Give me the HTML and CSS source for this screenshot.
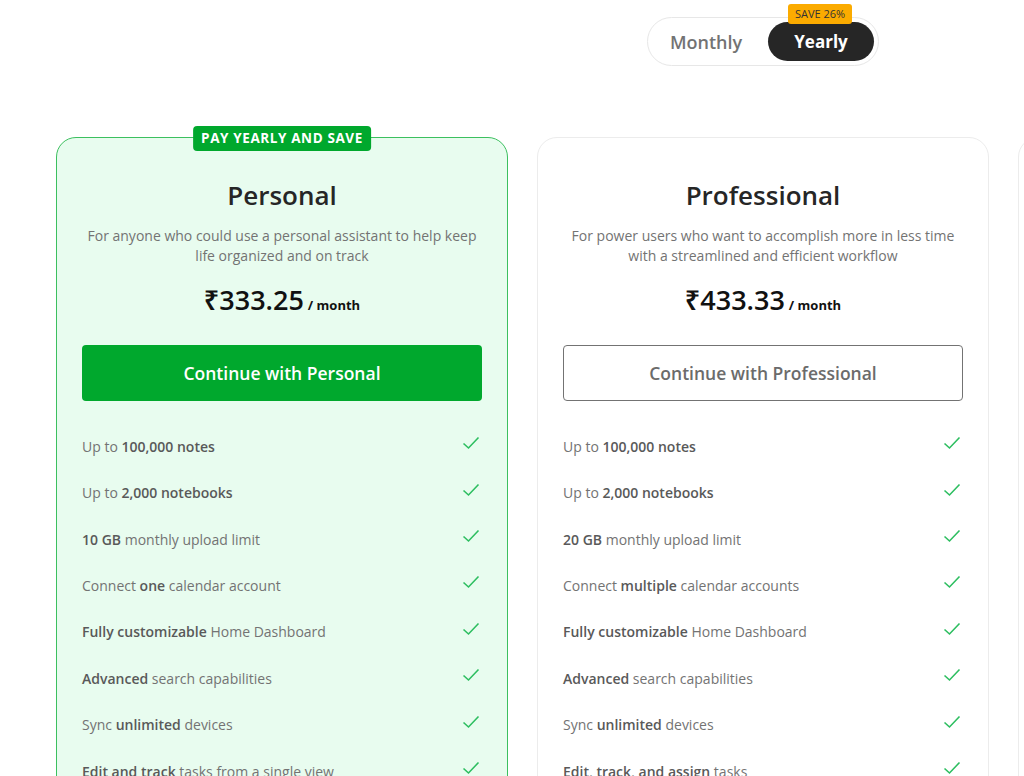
FILE: index.html
```html
<!DOCTYPE html>
<html>
<head>
<meta charset="utf-8">
<link rel="stylesheet" href="styles.css">
</head>
<body>
<div class="page">
  <div class="toggle-row">
    <div class="toggle">
      <button class="tab">Monthly</button>
      <button class="tab active">Yearly<span class="save">SAVE 26%</span></button>
    </div>
  </div>
  <div class="cards">
    <div class="card featured">
      <div class="ribbon">PAY YEARLY AND SAVE</div>
      <h2 class="title">Personal</h2>
      <p class="desc">For anyone who could use a personal assistant to help keep life organized and on track</p>
      <div class="price"><span class="amount">₹333.25</span><span class="per">/ month</span></div>
      <button class="cta primary">Continue with Personal</button>
      <ul class="features">
        <li><span>Up to <b>100,000 notes</b></span><svg class="check" viewBox="0 0 18 14"><polyline points="1.5,7.5 6.5,12 16.5,1.5"/></svg></li>
        <li><span>Up to <b>2,000 notebooks</b></span><svg class="check" viewBox="0 0 18 14"><polyline points="1.5,7.5 6.5,12 16.5,1.5"/></svg></li>
        <li><span><b>10 GB</b> monthly upload limit</span><svg class="check" viewBox="0 0 18 14"><polyline points="1.5,7.5 6.5,12 16.5,1.5"/></svg></li>
        <li><span>Connect <b>one</b> calendar account</span><svg class="check" viewBox="0 0 18 14"><polyline points="1.5,7.5 6.5,12 16.5,1.5"/></svg></li>
        <li><span><b>Fully customizable</b> Home Dashboard</span><svg class="check" viewBox="0 0 18 14"><polyline points="1.5,7.5 6.5,12 16.5,1.5"/></svg></li>
        <li><span><b>Advanced</b> search capabilities</span><svg class="check" viewBox="0 0 18 14"><polyline points="1.5,7.5 6.5,12 16.5,1.5"/></svg></li>
        <li><span>Sync <b>unlimited</b> devices</span><svg class="check" viewBox="0 0 18 14"><polyline points="1.5,7.5 6.5,12 16.5,1.5"/></svg></li>
        <li><span><b>Edit and track</b> tasks from a single view</span><svg class="check" viewBox="0 0 18 14"><polyline points="1.5,7.5 6.5,12 16.5,1.5"/></svg></li>
      </ul>
    </div>
    <div class="card">
      <h2 class="title">Professional</h2>
      <p class="desc">For power users who want to accomplish more in less time with a streamlined and efficient workflow</p>
      <div class="price"><span class="amount">₹433.33</span><span class="per">/ month</span></div>
      <button class="cta outline">Continue with Professional</button>
      <ul class="features">
        <li><span>Up to <b>100,000 notes</b></span><svg class="check" viewBox="0 0 18 14"><polyline points="1.5,7.5 6.5,12 16.5,1.5"/></svg></li>
        <li><span>Up to <b>2,000 notebooks</b></span><svg class="check" viewBox="0 0 18 14"><polyline points="1.5,7.5 6.5,12 16.5,1.5"/></svg></li>
        <li><span><b>20 GB</b> monthly upload limit</span><svg class="check" viewBox="0 0 18 14"><polyline points="1.5,7.5 6.5,12 16.5,1.5"/></svg></li>
        <li><span>Connect <b>multiple</b> calendar accounts</span><svg class="check" viewBox="0 0 18 14"><polyline points="1.5,7.5 6.5,12 16.5,1.5"/></svg></li>
        <li><span><b>Fully customizable</b> Home Dashboard</span><svg class="check" viewBox="0 0 18 14"><polyline points="1.5,7.5 6.5,12 16.5,1.5"/></svg></li>
        <li><span><b>Advanced</b> search capabilities</span><svg class="check" viewBox="0 0 18 14"><polyline points="1.5,7.5 6.5,12 16.5,1.5"/></svg></li>
        <li><span>Sync <b>unlimited</b> devices</span><svg class="check" viewBox="0 0 18 14"><polyline points="1.5,7.5 6.5,12 16.5,1.5"/></svg></li>
        <li><span><b>Edit, track, and assign</b> tasks</span><svg class="check" viewBox="0 0 18 14"><polyline points="1.5,7.5 6.5,12 16.5,1.5"/></svg></li>
      </ul>
    </div>
    <div class="card">
      <h2 class="title">Teams</h2>
    </div>
  </div>
</div>
</body>
</html>
```

FILE: styles.css
```css
* { box-sizing: border-box; }
html, body { margin: 0; padding: 0; background: #fff; }
body {
  font-family: "Open Sans", "Noto Sans", "Liberation Sans", sans-serif;
  color: #333;
  overflow: hidden;
  width: 1024px;
  height: 776px;
}
.page { width: 1024px; overflow: hidden; }

.toggle-row {
  display: flex;
  padding-top: 17px;
  padding-left: 647px;
  height: 137px;
}
.toggle {
  display: flex;
  align-items: center;
  gap: 4px;
  width: 232px;
  height: 49px;
  border: 1px solid #e7e7e7;
  border-radius: 25px;
  padding: 0 4px 0 0;
}
.tab {
  position: relative;
  border: 0;
  background: transparent;
  font-family: inherit;
  font-size: 18px;
  font-weight: 600;
  color: #737373;
  height: 39px;
  border-radius: 20px;
  padding: 0;
  cursor: pointer;
}
.tab:first-child { width: 116px; }
.tab.active {
  width: 106px;
  background: #262626;
  color: #fff;
  font-weight: 700;
  font-size: 17px;
}
.save {
  position: absolute;
  top: -18px;
  left: 20px;
  width: 64px;
  height: 20px;
  line-height: 20px;
  background: #fbab00;
  color: #333;
  font-size: 11px;
  font-weight: 500;
  border-radius: 3px;
  text-align: center;
}

.cards {
  display: flex;
  gap: 29px;
  padding-left: 56px;
}
.card {
  position: relative;
  flex: 0 0 452px;
  height: 700px;
  border: 1px solid #ececec;
  border-radius: 20px;
  padding: 38px 25px 0;
  background: #fff;
  text-align: center;
}
.card.featured {
  background: #e8fcef;
  border-color: #3cc05f;
}
.ribbon {
  position: absolute;
  top: -12px;
  left: 50%;
  transform: translateX(-50%);
  background: #00a82d;
  color: #fff;
  font-size: 13.5px;
  font-weight: 700;
  letter-spacing: 0.6px;
  padding: 0 8px;
  height: 25px;
  line-height: 25px;
  border-radius: 4px;
  white-space: nowrap;
}
.title {
  margin: 0;
  font-size: 26px;
  font-weight: 600;
  line-height: 38px;
  color: #262626;
}
.desc {
  margin: 12px 0 0;
  font-size: 14px;
  line-height: 20px;
  color: #737373;
}
.price {
  margin-top: 16px;
  line-height: 36px;
  color: #111;
}
.amount {
  font-size: 27px;
  font-weight: 600;
}
.per {
  font-size: 13px;
  font-weight: 700;
  margin-left: 4px;
}
.cta {
  display: block;
  width: 400px;
  height: 56px;
  margin-top: 22px;
  border-radius: 4px;
  font-family: inherit;
  font-size: 17.5px;
  font-weight: 600;
  cursor: pointer;
}
.cta.primary {
  background: #00a82d;
  border: 0;
  color: #fff;
}
.cta.outline {
  background: #fff;
  border: 1px solid #737373;
  color: #6b6b6b;
}
.features {
  list-style: none;
  margin: 22px 0 0;
  padding: 0;
}
.features li {
  display: flex;
  align-items: center;
  justify-content: space-between;
  height: 46.43px;
  font-size: 14px;
  color: #737373;
  text-align: left;
}
.features b { color: #595959; font-weight: 600; }
.check {
  width: 18px;
  height: 14px;
  margin-right: 2px;
  margin-top: -6px;
  fill: none;
  stroke: #2dbe60;
  stroke-width: 1.6;
}
```
